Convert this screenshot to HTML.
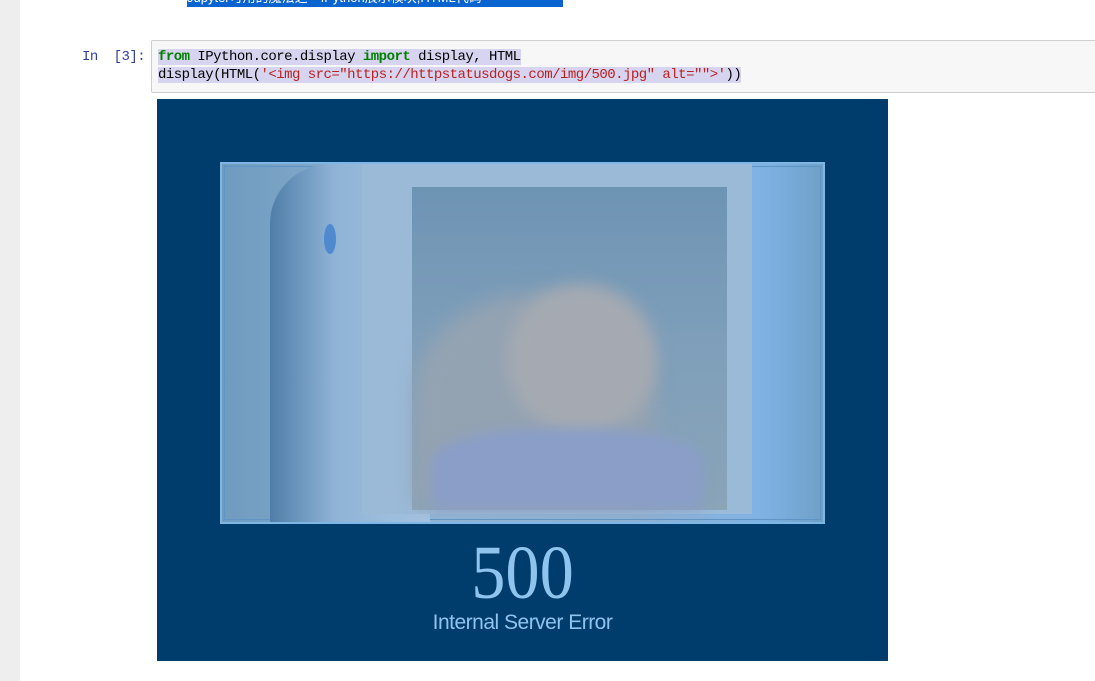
<!DOCTYPE html>
<html><head><meta charset="utf-8"><style>
body{margin:0;width:1095px;height:681px;overflow:hidden;background:#fff;position:relative;font-family:"Liberation Mono","Noto Sans CJK SC",monospace}
.strip{position:absolute;left:0;top:0;width:20px;height:681px;background:#eeeeee}
.sel{position:absolute;left:187px;top:0;width:376px;height:7px;background:#0a64d0;overflow:hidden;color:#fff;font:13px "Liberation Sans","Noto Sans CJK SC",sans-serif;line-height:0}
.prompt{position:absolute;left:82px;top:48px;color:#303f9f;font-size:14px;line-height:18px;letter-spacing:-0.5px}
.cell{position:absolute;left:151px;top:40px;width:950px;height:51px;background:#f7f7f7;border:1px solid #cfcfcf;border-radius:2px}
.code{position:absolute;left:158px;top:48px;font-size:14px;line-height:18px;white-space:pre;color:#000;letter-spacing:-0.52px}
.hl{background:#d7d4f0}
.k{color:#008000;font-weight:bold}.s{color:#ba2121}
.img{position:absolute;left:157px;top:99px;width:731px;height:562px;background:#003c6c}
.photo{position:absolute;left:63px;top:63px;width:601px;height:358px;border:2px solid #7eb6e6;outline:1px solid #5f94c4;outline-offset:-5px;overflow:hidden;
background:linear-gradient(90deg,#6f9bbf 0%,#7ea6c8 15%,#92b6d8 35%,#8fb2d4 70%,#7fb2e4 90%,#6fa0c8 100%)}
.n500{position:absolute;left:157px;width:731px;top:530px;text-align:center;color:#8ec4ee;font:76px "Liberation Serif",serif;line-height:86px;transform:scaleX(0.9)}
.ise{position:absolute;left:157px;width:731px;top:611px;text-align:center;color:#8ec4ee;font:21px "Liberation Sans",sans-serif;letter-spacing:-0.5px}
</style></head><body>
<div class="strip"></div>
<div class="sel"><span style="position:relative;top:-2px">Jupyter可用的魔法之一IPython展示模块,HTML代码</span></div>
<div class="prompt">In&nbsp;&nbsp;[3]:</div>
<div class="cell"></div>
<div class="code"><span class="hl"><span class="k">from</span> IPython.core.display <span class="k">import</span> display, HTML</span>
<span class="hl">display(HTML(<span class="s">'&lt;img src="https://httpstatusdogs.com/img/500.jpg" alt=""&gt;'</span>))</span></div>
<div class="img">
<div class="photo">
 <div style="position:absolute;left:48px;top:0;width:160px;height:360px;background:linear-gradient(90deg,#4f7ea8,#8fb3d6 40%,#a6c4e2);border-radius:60px 0 0 0"></div>
 <div style="position:absolute;left:140px;top:0;width:390px;height:350px;background:#9bbad8"></div>
 <div style="position:absolute;left:190px;top:23px;width:315px;height:323px;background:linear-gradient(180deg,#6e94b4,#7f9fba 50%,#8aa4b8)"></div>
 <div style="position:absolute;left:192px;top:130px;width:240px;height:210px;background:#94a3b2;border-radius:50% 50% 0 0;filter:blur(10px)"></div>
 <div style="position:absolute;left:285px;top:120px;width:150px;height:150px;background:#a5aab2;border-radius:50%;filter:blur(8px)"></div>
 <div style="position:absolute;left:210px;top:265px;width:270px;height:80px;background:#8a9ec8;border-radius:40% 40% 0 0;filter:blur(6px)"></div>
 <div style="position:absolute;left:102px;top:60px;width:12px;height:30px;background:#4f8ad0;border-radius:50%"></div>
</div>
</div>
<div class="n500">500</div>
<div class="ise">Internal Server Error</div>
</body></html>
